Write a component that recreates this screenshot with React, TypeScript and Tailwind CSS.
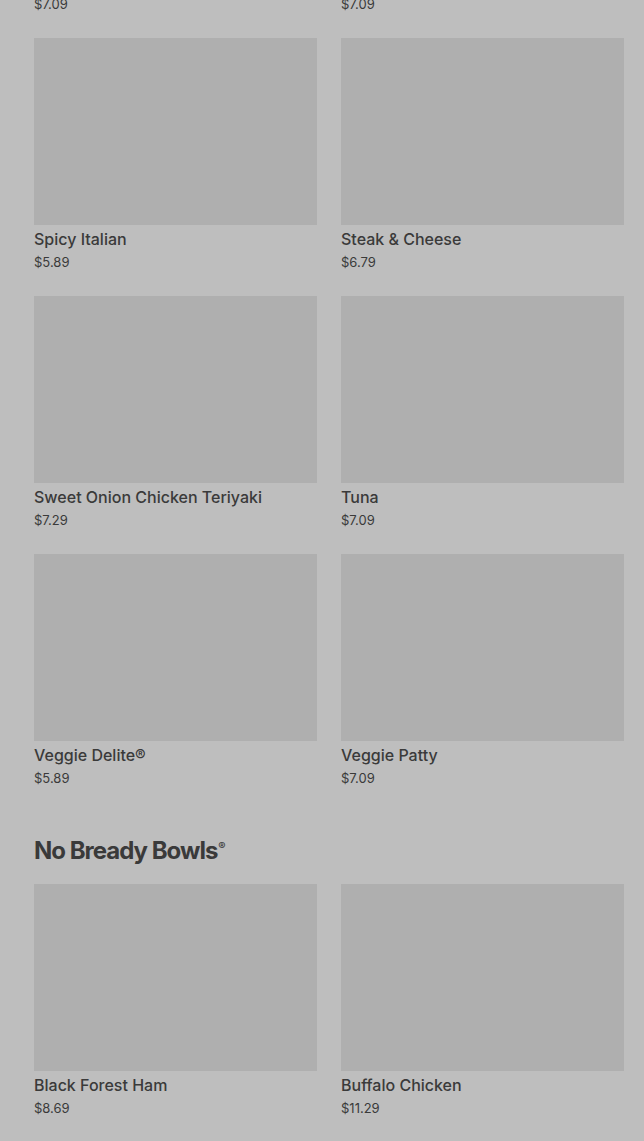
const subs = [
  { name: "Cold Cut Combo", price: "$7.09" },
  { name: "Italian B.M.T.®", price: "$7.09" },
  { name: "Spicy Italian", price: "$5.89" },
  { name: "Steak & Cheese", price: "$6.79" },
  { name: "Sweet Onion Chicken Teriyaki", price: "$7.29" },
  { name: "Tuna", price: "$7.09" },
  { name: "Veggie Delite®", price: "$5.89" },
  { name: "Veggie Patty", price: "$7.09" },
];

const bowls = [
  { name: "Black Forest Ham", price: "$8.69" },
  { name: "Buffalo Chicken", price: "$11.29" },
];

function Card({ name, price }: { name: string; price: string }) {
  return (
    <div className="flex flex-col">
      <div className="h-[187px] w-full bg-[#afafaf]" />
      <div className="mt-1 text-[16px] leading-5 font-medium text-[#3a3a3a]">
        {name}
      </div>
      <div className="mt-1 text-[13px] leading-[18px] text-[#3a3a3a]">
        {price}
      </div>
    </div>
  );
}

export default function App() {
  return (
    <div
      className="h-[1141px] overflow-hidden bg-[#bebebe]"
      style={{ fontFamily: "Inter, 'Liberation Sans', sans-serif" }}
    >
      <div className="-mt-[220px] pl-[34px] pr-[20px]">
        <div className="grid grid-cols-2 gap-x-6 gap-y-[25px]">
          {subs.map((s) => (
            <Card key={s.name} {...s} />
          ))}
        </div>

        <h2 className="mt-12 mb-[17px] h-8 text-[24px] leading-8 font-bold tracking-[-1px] text-[#3a3a3a]">
          No Bready Bowls
          <span className="relative -top-[9px] ml-px text-[11px] leading-none tracking-normal">®</span>
        </h2>

        <div className="grid grid-cols-2 gap-x-6 gap-y-[25px]">
          {bowls.map((s) => (
            <Card key={s.name} {...s} />
          ))}
        </div>
      </div>
    </div>
  );
}
